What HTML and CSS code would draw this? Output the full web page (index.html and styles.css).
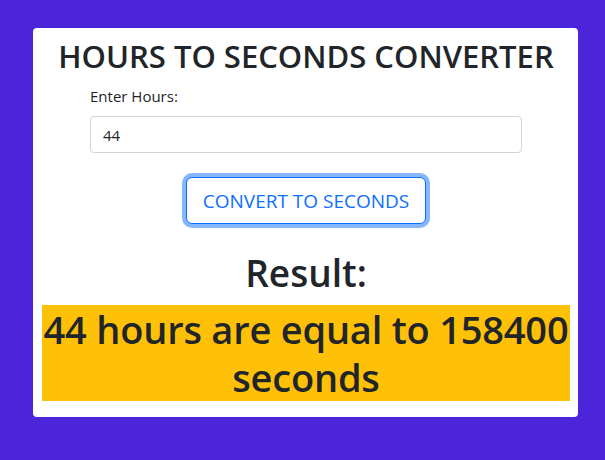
FILE: index.html
```html
<!DOCTYPE html>
<html>
<head>
<meta charset="utf-8">
<link rel="stylesheet" href="styles.css">
</head>
<body>
<main class="card">
  <h1 class="title">HOURS TO SECONDS CONVERTER</h1>
  <div class="form">
    <label class="label" for="hours">Enter Hours:</label>
    <input class="input" id="hours" type="text" value="44">
  </div>
  <div class="actions">
    <button class="btn">CONVERT TO SECONDS</button>
  </div>
  <h2 class="result-label">Result:</h2>
  <div class="result">44 hours are equal to 158400 seconds</div>
</main>
</body>
</html>
```

FILE: styles.css
```css
* { box-sizing: border-box; }
html, body { margin: 0; }
body {
  background: #4c24d9;
  font-family: "Open Sans", "Noto Sans", sans-serif;
  color: #212529;
  width: 605px;
  height: 460px;
  padding: 28px 27px 0 33px;
}
.card {
  width: 545px;
  background: #fff;
  border-radius: 4px;
  padding: 8px 8px 16px 9px;
  text-align: center;
}
.title {
  margin: 0 0 8px;
  font-size: 31px;
  font-weight: 600;
  line-height: 40px;
}
.form {
  width: 432px;
  margin: 0 auto;
  text-align: left;
}
.label {
  display: block;
  font-size: 15px;
  line-height: 24px;
  margin-bottom: 8px;
}
.input {
  display: block;
  width: 100%;
  height: 37px;
  padding: 6px 12px;
  font-family: inherit;
  font-size: 15px;
  color: #212529;
  border: 1px solid #ced4da;
  border-radius: 4px;
  outline: none;
}
.actions {
  margin-top: 24px;
}
.btn {
  width: 240px;
  height: 47px;
  font-family: inherit;
  font-size: 19px;
  color: #0d6efd;
  background: #fff;
  border: 1px solid #0d6efd;
  border-radius: 6px;
  box-shadow: 0 0 0 4px #86b7fe;
  padding: 0;
}
.result-label {
  margin: 25px 0 8px;
  font-size: 37px;
  font-weight: 600;
  line-height: 48px;
}
.result {
  background: #ffc107;
  font-size: 38px;
  font-weight: 600;
  line-height: 48px;
  letter-spacing: -0.2px;
}
```
